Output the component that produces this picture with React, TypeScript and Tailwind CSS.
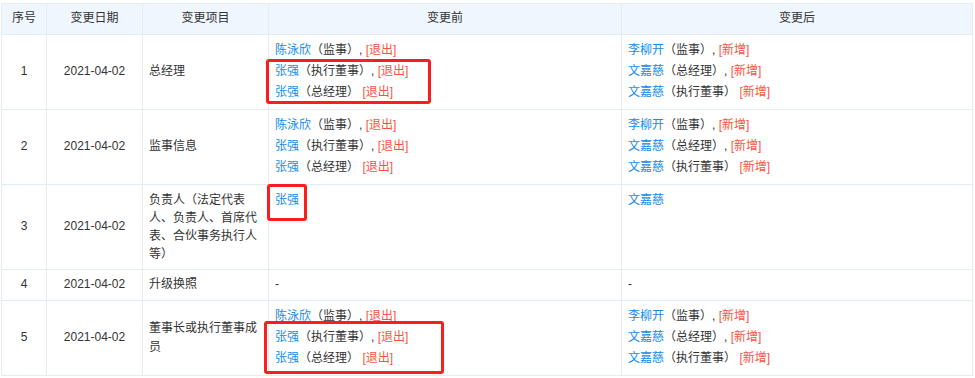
import React from 'react';

type Entry = { name: string; role?: string; tag: string };

type Mark = { from: number; left: number; top: number; width: number; height: number };

type Row = {
    no: number;
    date: string;
    item: string;
    before: Entry[] | null;
    after: Entry[] | null;
    mark?: Mark;
    itemTall?: boolean;
};

const rows: Row[] = [
    {
        no: 1,
        date: '2021-04-02',
        item: '总经理',
        before: [
            { name: '陈泳欣', role: '监事', tag: '退出' },
            { name: '张强', role: '执行董事', tag: '退出' },
            { name: '张强', role: '总经理', tag: '退出' },
        ],
        after: [
            { name: '李柳开', role: '监事', tag: '新增' },
            { name: '文嘉慈', role: '总经理', tag: '新增' },
            { name: '文嘉慈', role: '执行董事', tag: '新增' },
        ],
        mark: { from: 1, left: -9, top: -2, width: 165, height: 45 },
    },
    {
        no: 2,
        date: '2021-04-02',
        item: '监事信息',
        before: [
            { name: '陈泳欣', role: '监事', tag: '退出' },
            { name: '张强', role: '执行董事', tag: '退出' },
            { name: '张强', role: '总经理', tag: '退出' },
        ],
        after: [
            { name: '李柳开', role: '监事', tag: '新增' },
            { name: '文嘉慈', role: '总经理', tag: '新增' },
            { name: '文嘉慈', role: '执行董事', tag: '新增' },
        ],
    },
    {
        no: 3,
        date: '2021-04-02',
        item: '负责人（法定代表人、负责人、首席代表、合伙事务执行人等）',
        before: [{ name: '张强', tag: '' }],
        after: [{ name: '文嘉慈', tag: '' }],
        mark: { from: 0, left: -8, top: -6, width: 40, height: 37 },
        itemTall: true,
    },
    { no: 4, date: '2021-04-02', item: '升级换照', before: null, after: null },
    {
        no: 5,
        date: '2021-04-02',
        item: '董事长或执行董事成员',
        before: [
            { name: '陈泳欣', role: '监事', tag: '退出' },
            { name: '张强', role: '执行董事', tag: '退出' },
            { name: '张强', role: '总经理', tag: '退出' },
        ],
        after: [
            { name: '李柳开', role: '监事', tag: '新增' },
            { name: '文嘉慈', role: '总经理', tag: '新增' },
            { name: '文嘉慈', role: '执行董事', tag: '新增' },
        ],
        mark: { from: 1, left: -11, top: -6, width: 180, height: 53 },
    },
];

const font = { fontFamily: '"Liberation Sans", "Noto Sans CJK SC", sans-serif' };

const EntryLine = ({ e, last }: { e: Entry; last: boolean }) => (
    <div className="leading-[21px] whitespace-nowrap">
        <span className="text-[#128bed]">{e.name}</span>
        {e.role && <span>（{e.role}）</span>}
        {e.tag && (
            <>
                <span>{last ? ' ' : ', '}</span>
                <span className="text-[#f9533f]">[{e.tag}]</span>
            </>
        )}
    </div>
);

const Entries = ({ list, mark }: { list: Entry[] | null; mark?: Mark }) => {
    if (!list) return <div className="leading-[19px]">-</div>;
    const head = mark ? list.slice(0, mark.from) : list;
    const boxed = mark ? list.slice(mark.from) : [];
    return (
        <div>
            {head.map((e, i) => (
                <EntryLine key={i} e={e} last={i === list.length - 1} />
            ))}
            {mark && (
                <div className="relative">
                    {boxed.map((e, i) => (
                        <EntryLine key={i} e={e} last={mark.from + i === list.length - 1} />
                    ))}
                    <span
                        className="absolute border-[3px] border-[#fa1e1e] rounded-[3px] pointer-events-none"
                        style={{ left: mark.left, top: mark.top, width: mark.width, height: mark.height }}
                    />
                </div>
            )}
        </div>
    );
};

const cell = 'border border-[#e3ebf3] pt-[5px] pb-[6px] px-[6px] align-middle';

export default function App() {
    return (
        <div className="bg-white w-[975px] h-[378px] pt-[3px] pl-[1px] text-[12px] text-[#333]" style={font}>
            <table className="table-fixed border-collapse w-[972px]">
                <colgroup>
                    <col className="w-[45px]" />
                    <col className="w-[96px]" />
                    <col className="w-[126px]" />
                    <col className="w-[353px]" />
                    <col className="w-[351px]" />
                </colgroup>
                <thead>
                    <tr className="bg-[#f0f6fd] leading-[19px]">
                        <th className={`${cell} font-normal text-center`}>序号</th>
                        <th className={`${cell} font-normal text-center`}>变更日期</th>
                        <th className={`${cell} font-normal text-center`}>变更项目</th>
                        <th className={`${cell} font-normal text-center`}>变更前</th>
                        <th className={`${cell} font-normal text-center`}>变更后</th>
                    </tr>
                </thead>
                <tbody>
                    {rows.map(r => (
                        <tr key={r.no} className="leading-[19px]">
                            <td className={`${cell} text-center`}>{r.no}</td>
                            <td className={`${cell} text-center`}>{r.date}</td>
                            <td className={`${cell} ${r.itemTall ? 'leading-[18px] !py-[6px]' : ''}`}>{r.item}</td>
                            <td className={`${cell} !align-top`}>
                                <Entries list={r.before} mark={r.mark} />
                            </td>
                            <td className={`${cell} !align-top`}>
                                <Entries list={r.after} />
                            </td>
                        </tr>
                    ))}
                </tbody>
            </table>
        </div>
    );
}
